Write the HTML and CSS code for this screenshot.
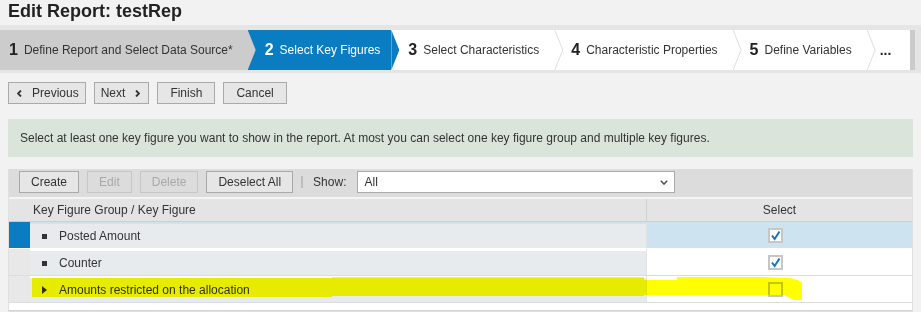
FILE: index.html
```html
<!DOCTYPE html>
<html lang="en">
<head>
  <meta charset="UTF-8" />
  <meta name="viewport" content="width=device-width, initial-scale=1.0" />
  <title>Edit Report: testRep</title>
  <link rel="stylesheet" href="styles.css">
</head>
<body>
  <h1 class="page-title">Edit Report: testRep</h1>

  <!-- WIZARD STEPS -->
  <div class="steps">
    <div class="step done"><span class="num">1</span>Define Report and Select Data Source*</div>
    <div class="step active"><span class="num">2</span>Select Key Figures</div>
    <div class="step"><span class="num">3</span>Select Characteristics</div>
    <div class="step"><span class="num">4</span>Characteristic Properties</div>
    <div class="step"><span class="num">5</span>Define Variables</div>
    <div class="step more">...</div>
    <div class="steps-scroll"></div>
  </div>

  <!-- WIZARD NAVIGATION -->
  <div class="wizard-nav">
    <button class="btn btn-prev">
      <svg width="5" height="7" viewBox="0 0 5 7"><path d="M4 0.5 L1 3.5 L4 6.5" fill="none" stroke="#333" stroke-width="1.8"/></svg>
      Previous
    </button>
    <button class="btn btn-next">
      Next
      <svg width="5" height="7" viewBox="0 0 5 7"><path d="M1 0.5 L4 3.5 L1 6.5" fill="none" stroke="#333" stroke-width="1.8"/></svg>
    </button>
    <button class="btn">Finish</button>
    <button class="btn">Cancel</button>
  </div>

  <div class="info">
    Select at least one key figure you want to show in the report. At most you can select one key figure group and multiple key figures.
  </div>

  <!-- KEY FIGURE TABLE -->
  <div class="panel">
    <div class="toolbar">
      <button class="btn">Create</button>
      <button class="btn" disabled>Edit</button>
      <button class="btn" disabled>Delete</button>
      <button class="btn">Deselect All</button>
      <span class="sep"></span>
      <span class="label">Show:</span>
      <div class="select">
        <span>All</span>
        <svg width="8" height="5" viewBox="0 0 8 5"><path d="M0.8 0.8 L4 4 L7.2 0.8" fill="none" stroke="#555" stroke-width="1.6"/></svg>
      </div>
    </div>

    <div class="grid">
      <div class="row head">
        <div class="c-rs"></div>
        <div class="c-name">Key Figure Group / Key Figure</div>
        <div class="c-sel">Select</div>
      </div>

      <div class="row selected">
        <div class="c-rs"></div>
        <div class="c-name"><span class="bullet"></span>Posted Amount</div>
        <div class="c-sel">
          <span class="check"><svg width="11" height="11" viewBox="0 0 11 11"><path d="M2 5.5 L4.6 9 L9.5 1.5" fill="none" stroke="#1376bf" stroke-width="2"/></svg></span>
        </div>
      </div>

      <div class="row">
        <div class="c-rs"></div>
        <div class="c-name"><span class="bullet"></span>Counter</div>
        <div class="c-sel">
          <span class="check"><svg width="11" height="11" viewBox="0 0 11 11"><path d="M2 5.5 L4.6 9 L9.5 1.5" fill="none" stroke="#1376bf" stroke-width="2"/></svg></span>
        </div>
      </div>

      <div class="row marked">
        <div class="c-rs"></div>
        <div class="c-name"><span class="expander"></span>Amounts restricted on the allocation</div>
        <div class="c-sel"><span class="check"></span></div>
        <!-- highlighter stroke drawn over the row -->
        <svg class="marker" width="775" height="26" viewBox="0 0 775 26">
          <path d="M0 1 H300 V0 H612 V3 H645 V0 H730 L758 1 L766 3 L770 6 V23 L762 23 L752 18 H645 V18 H612 V19 H300 V20 H0 Z" fill="#ffff00"/>
        </svg>
      </div>

      <div class="grid-foot"></div>
    </div>
  </div>
</body>
</html>
```

FILE: styles.css
```css
/* ---------- BASE ---------- */
*{margin:0;padding:0;box-sizing:border-box;}
html,body{
  background:#f2f2f2;
  color:#333;
  font-family:"Liberation Sans",Arial,sans-serif;
  font-size:12px;
}

.page-title{height:25px;padding:0 8px;font-size:18px;line-height:22px;color:#222;}

/* ---------- WIZARD STEPS ---------- */
.steps{display:flex;padding:5px 0 3px;background:#e5e5e5;}
.step{
  position:relative;
  display:flex;align-items:center;
  height:40px;
  padding:0 15px 0 17px;
  background:#fff;
  white-space:nowrap;
}
.step .num{font-size:16px;font-weight:bold;margin-right:6px;color:#222;}
/* thin chevron between white steps */
.step::after{
  content:'';
  position:absolute;top:0;right:-9px;
  width:9px;height:40px;
  background:#dedede;
  clip-path:polygon(0 0,1px 0,9px 50%,1px 100%,0 100%,8px 50%);
  z-index:1;
}
.step.done{padding-left:9px;background:#ccc;}
.step.active{padding-right:11px;background:#0a7cc1;color:#fff;}
.step.active .num{color:#fff;}
.step.done::after,.step.active::after{right:-8px;width:8px;clip-path:polygon(0 0,100% 50%,0 100%);}
.step.done::after{background:#ccc;}
.step.active::after{background:#0a7cc1;}
.step.more{flex:1;padding-left:13px;font-size:14px;font-weight:bold;color:#222;}
.step.more::after{display:none;}
.steps-scroll{width:5px;margin-right:6px;background:#cbcbcb;}

/* ---------- BUTTONS ---------- */
.btn{
  display:inline-flex;align-items:center;
  height:22px;
  padding:0 12px;
  border:1px solid #a9a9a9;
  border-radius:0;
  background:#e6e6e6;
  color:#333;
  font-family:inherit;font-size:12px;
}
.btn:disabled{border-color:#c6c6c6;background:#dcdcdc;color:#a8a8a8;}
.btn-prev{padding:0 6px 0 8px;}
.btn-prev svg{margin-right:10px;}
.btn-next{padding:0 8px 0 6px;}
.btn-next svg{margin-left:10px;}

.wizard-nav{display:flex;gap:8px;padding:9px 8px 0;}

.info{
  margin:15px 8px 0;
  padding:0 12px;
  height:38px;line-height:38px;
  background:#dbe4db;
}

/* ---------- PANEL / TOOLBAR ---------- */
.panel{margin:12px 8px 0;border:1px solid #e0e0e0;border-top:0;}
.toolbar{
  display:flex;align-items:center;gap:8px;
  height:30px;
  padding:0 10px 2px;
  background:#dcdcdc;
  border-bottom:2px solid #f4f4f4;
}
.toolbar .btn{padding:0 11px;}
.toolbar .sep{width:2px;height:12px;background:#bdbdbd;margin-right:2px;}
.toolbar .label{margin-right:3px;}
.select{
  display:flex;align-items:center;justify-content:space-between;
  width:318px;height:22px;
  padding:0 6px;
  border:1px solid #ababab;
  background:#fff;
}

/* ---------- GRID ---------- */
.grid{background:#fff;}
.row{
  position:relative;
  display:grid;grid-template-columns:21px 1fr 266px;
  height:27px;
  border-bottom:1px solid #dcdcdc;
}
.row > div{display:flex;align-items:center;}
.c-rs{background:#e8e8e8;}
.c-name{padding-left:12px;background:#e7ebee;border-top:2px solid #fff;}
.c-sel{justify-content:center;border-left:1px solid #e2e2e2;}

.row.head{height:23px;border-bottom-color:#cdcdcd;}
.row.head > div{background:#e4e4e4;border-top:0;}
.row.head .c-name{padding-left:3px;}
.row.head .c-sel{border-left-color:#d0d0d0;}

.row.selected{border-bottom-color:#fff;}
.row.selected .c-rs{background:#0a7cc1;}
.row.selected .c-name{border-top-color:#cfe3ef;}
.row.selected .c-sel{background:#cde3f0;}

.bullet{width:5px;height:5px;margin-right:12px;background:#333;}
.expander{
  width:0;height:0;margin-right:12px;
  border-left:5px solid #333;
  border-top:4px solid transparent;
  border-bottom:4px solid transparent;
}
.check{
  display:flex;align-items:center;justify-content:center;
  width:15px;height:15px;
  margin-right:8px;
  border:2px solid #c6c6c6;
  background:#fff;
}

/* yellow highlighter stroke */
.marker{position:absolute;left:23px;top:1px;mix-blend-mode:multiply;overflow:visible;}

.grid-foot{height:8px;border-bottom:1px solid #d4d4d4;}
```
